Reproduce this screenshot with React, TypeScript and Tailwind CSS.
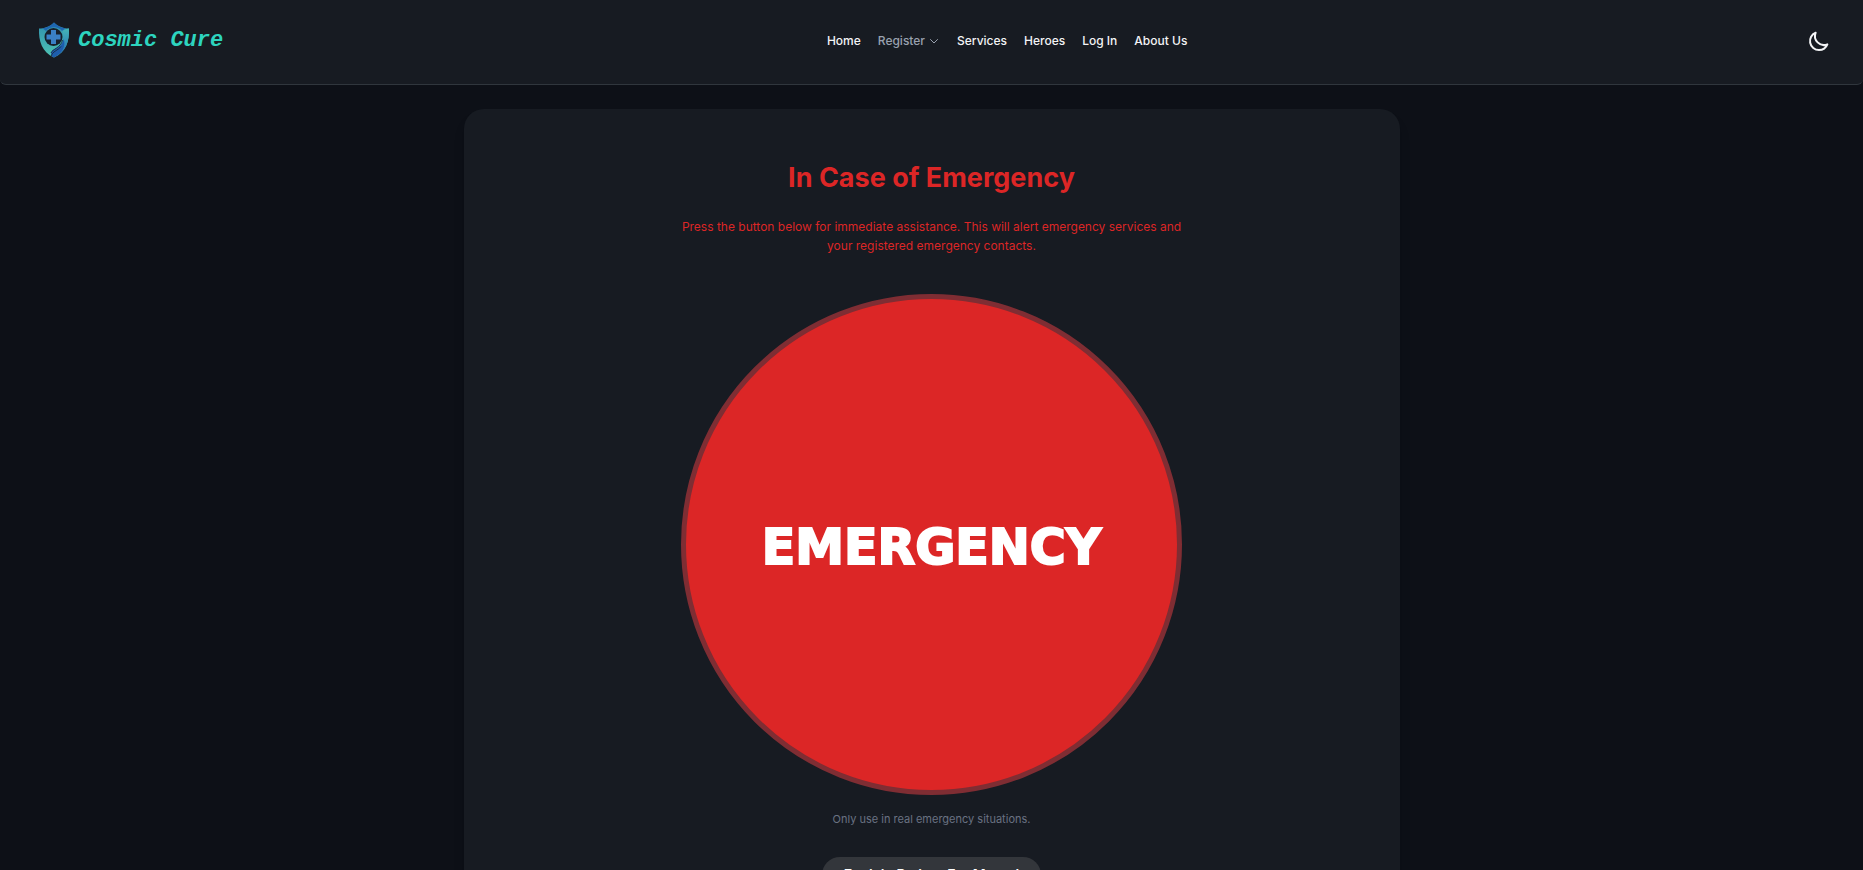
const links = ["Services", "Heroes", "Log In", "About Us"];

function Logo() {
  return (
    <svg viewBox="0 0 32 36" className="h-9 w-8 shrink-0" aria-hidden="true">
      <defs>
        <linearGradient id="shield" x1="0" y1="0" x2="0" y2="1">
          <stop offset="0" stopColor="#2f8fae" />
          <stop offset="1" stopColor="#4fc4b4" />
        </linearGradient>
        <linearGradient id="band" x1="0" y1="0" x2="0" y2="1">
          <stop offset="0" stopColor="#45b5b5" />
          <stop offset="0.6" stopColor="#2f86b8" />
          <stop offset="1" stopColor="#1d57a8" />
        </linearGradient>
      </defs>
      <path d="M1 6.500C6 6.500 12 4.500 16 0.500C20 4.500 26 6.500 31 6.500C31.500 19 28 30 16 35.500C4 30 0.500 19 1 6.500Z" fill="url(#shield)" />
      <path d="M16 0.500C12 4.500 8 5.800 4.500 6.300L8 9C12 4 20 4 24 9L27.500 6.300C24 5.800 20 4.500 16 0.500Z" fill="#1f66b0" />
      <path d="M31 6.500C31.500 19 28 30 16 35.500C12.500 35 12 30 16 27.500C22 24 27 20 24.500 9C27 7.500 29 6.800 31 6.500Z" fill="url(#band)" />
      <path d="M15.500 35C11.500 32 13 28.500 17 27C22 25 25 22 25.500 17C28.500 24 24 31 15.500 35Z" fill="#1e5dac" />
      <circle cx="15.500" cy="15" r="9" fill="#17202c" />
      <path d="M13 8H18V12.500H22.500V17.500H18V22H13V17.500H8.500V12.500H13Z" fill="#3a80c6" />
      <path d="M13.500 34C14 29.500 20 28.500 23 24.500" fill="none" stroke="#17202c" strokeWidth="0.800" />
      <path d="M13 31C14 27 23 26 24.500 18" fill="none" stroke="#17202c" strokeWidth="0.800" />
    </svg>
  );
}

function Chevron() {
  return (
    <svg viewBox="0 0 12 12" className="size-3" fill="none" stroke="currentColor" strokeLinecap="round" strokeLinejoin="round" aria-hidden="true">
      <path d="M2.500 4.500L6 8L9.500 4.500" />
    </svg>
  );
}

function Moon() {
  return (
    <svg viewBox="0 0 24 24" className="size-6" fill="none" stroke="currentColor" strokeWidth="2" strokeLinecap="round" strokeLinejoin="round" aria-hidden="true">
      <path d="M20.354 15.354A9 9 0 018.646 3.646 9.003 9.003 0 0012 21a9.003 9.003 0 008.354-5.646z" />
    </svg>
  );
}

export default function App() {
  return (
    <div className="min-h-screen bg-[#0d1017] pb-6 font-['Inter',sans-serif]">
      <header className="flex h-[85px] items-center justify-between rounded-b-md border-b border-[#30363d] bg-[#171b22] pr-4 pb-0.5 pl-8">
        <a href="#home" className="flex items-center gap-2 pb-0.5 pl-1.5 text-[#2dd4bf]">
          <Logo />
          <span className="font-['Courier_New','Liberation_Mono',monospace] text-[22px] font-bold italic">Cosmic Cure</span>
        </a>
        <nav className="flex items-center gap-[17px] text-xs font-medium text-gray-100">
          <a href="#home">Home</a>
          <button type="button" className="flex items-center gap-[3px] text-gray-400">
            Register
            <Chevron />
          </button>
          {links.map((label) => (
            <a key={label} href="#">
              {label}
            </a>
          ))}
        </nav>
        <button type="button" aria-label="Toggle dark mode" className="px-4 text-gray-100">
          <Moon />
        </button>
      </header>

      <main className="px-8 pt-6">
        <section className="mx-auto flex max-w-[936px] flex-col items-center rounded-[20px] bg-[#171b22] px-6 pt-12 pb-12 text-center shadow-lg">
          <h1 className="text-[27px] leading-[42px] font-bold text-[#dc2626]">In Case of Emergency</h1>
          <p className="mt-[18px] max-w-[520px] text-xs leading-[19px] text-[#dc2626]">
            Press the button below for immediate assistance. This will alert emergency services and your registered
            emergency contacts.
          </p>
          <button
            type="button"
            className="mt-[39px] aspect-square w-full max-w-[501px] rounded-full border-[5px] border-[#7f2d33] bg-[#dc2626] pt-1.5 font-['Arial_Black','DejaVu_Sans',sans-serif] text-[49px] font-black text-white [-webkit-text-stroke:2px_white]"
          >
            EMERGENCY
          </button>
          <p className="mt-4 text-[11px] leading-4 text-gray-500">Only use in real emergency situations.</p>
          <button type="button" className="mt-[30px] rounded-full bg-[#33363b] px-[22px] py-2 text-sm font-semibold text-white">
            Explain Patient For Mental
          </button>
        </section>
      </main>
    </div>
  );
}
